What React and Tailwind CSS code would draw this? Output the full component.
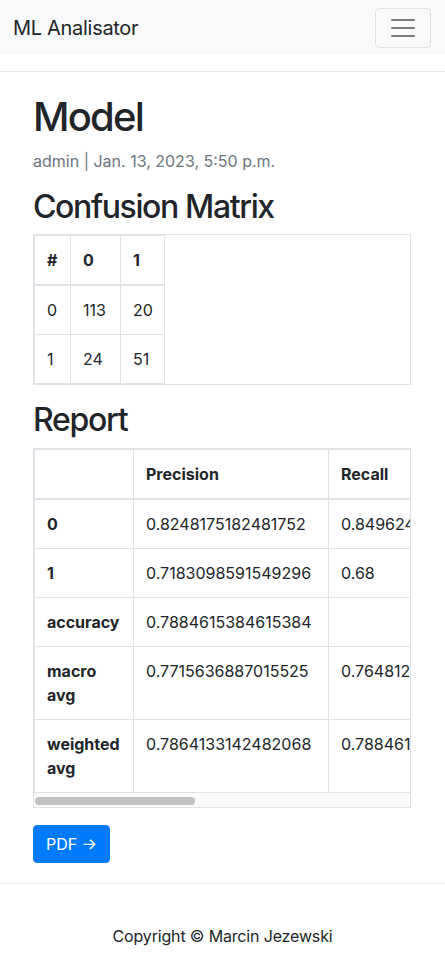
import React from "react";

const confusion = [
  ["0", "113", "20"],
  ["1", "24", "51"],
];

const report = [
  ["0", "0.8248175182481752", "0.849624060150376", "0.837037037037037", "133"],
  ["1", "0.7183098591549296", "0.68", "0.6986301369863014", "75"],
  ["accuracy", "0.7884615384615384", "", "", ""],
  ["macro avg", "0.7715636887015525", "0.764812030075188", "0.7678335870116692", "208"],
  ["weighted avg", "0.7864133142482068", "0.7884615384615384", "0.7871307028841275", "208"],
];

const cell = "border border-[#dee2e6] p-3 align-top text-left";
const headCell = "border border-[#dee2e6] border-b-2 p-3 align-bottom text-left font-bold";

export default function App() {
  return (
    <div className="min-h-screen bg-white font-[Inter,sans-serif] text-base leading-6 text-[#212529]">
      <nav className="flex h-[55px] items-center justify-between bg-[#f8f9fa] pl-[13px] pr-[14px]">
        <span className="mt-px text-[20px] leading-[30px] tracking-[-0.015em]">ML Analisator</span>
        <button className="flex h-10 w-14 items-center justify-center rounded border border-black/10">
          <svg width="30" height="30" viewBox="0 0 30 30" fill="none">
            <path
              d="M4 7h22M4 15h22M4 23h22"
              stroke="rgba(0,0,0,0.5)"
              strokeWidth="2"
              strokeLinecap="round"
            />
          </svg>
        </button>
      </nav>
      <hr className="my-4 border-t border-black/10" />

      <main className="pl-[33px] pr-[34px] pt-[5px]">
        <h1 className="mb-2 text-[40px] font-medium leading-[1.2] tracking-[-0.045em]">Model</h1>
        <p className="mb-[15px] text-[#6c757d]">admin | Jan. 13, 2023, 5:50 p.m.</p>

        <h2 className="mb-2 text-[32px] font-medium leading-[1.2] tracking-[-0.043em]">
          Confusion Matrix
        </h2>
        <div className="mb-4 border border-[#dee2e6]">
          <table className="w-[130px] table-fixed border-collapse border border-[#dee2e6]">
            <colgroup>
              <col className="w-[36px]" />
              <col className="w-[50px]" />
              <col className="w-[44px]" />
            </colgroup>
            <thead>
              <tr>
                <th className={headCell}>#</th>
                <th className={headCell}>0</th>
                <th className={headCell}>1</th>
              </tr>
            </thead>
            <tbody>
              {confusion.map((r) => (
                <tr key={r[0]}>
                  {r.map((v, i) => (
                    <td key={i} className={cell}>
                      {v}
                    </td>
                  ))}
                </tr>
              ))}
            </tbody>
          </table>
        </div>

        <h2 className="mb-2 text-[32px] font-medium leading-[1.2] tracking-[-0.04em]">Report</h2>
        <div className="mb-[17px] border border-[#dee2e6]">
          <div className="overflow-hidden">
            <table className="w-[872px] table-fixed border-collapse border border-[#dee2e6]">
              <colgroup>
                <col className="w-[99px]" />
                <col className="w-[195px]" />
                <col className="w-[195px]" />
                <col className="w-[195px]" />
                <col className="w-[188px]" />
              </colgroup>
              <thead>
                <tr>
                  <th className={headCell}></th>
                  <th className={headCell}>Precision</th>
                  <th className={headCell}>Recall</th>
                  <th className={headCell}>F1-score</th>
                  <th className={headCell}>Support</th>
                </tr>
              </thead>
              <tbody>
                {report.map((r) => (
                  <tr key={r[0]}>
                    <th className={cell + " font-bold"}>{r[0]}</th>
                    {r.slice(1).map((v, i) => (
                      <td key={i} className={cell}>
                        {v}
                      </td>
                    ))}
                  </tr>
                ))}
              </tbody>
            </table>
          </div>
          <div className="h-[14px] bg-[#fafafa] pl-px pt-1">
            <div className="h-2 w-[160px] rounded-full bg-[#c1c1c1]" />
          </div>
        </div>

        <button className="rounded border border-[#007bff] bg-[#007bff] px-3 py-1.5 text-white">
          PDF →
        </button>
      </main>

      <hr className="mt-5 border-t border-black/10" />
      <footer className="pb-10 pt-10 text-center tracking-[-0.01em]">Copyright © Marcin Jezewski</footer>
    </div>
  );
}
